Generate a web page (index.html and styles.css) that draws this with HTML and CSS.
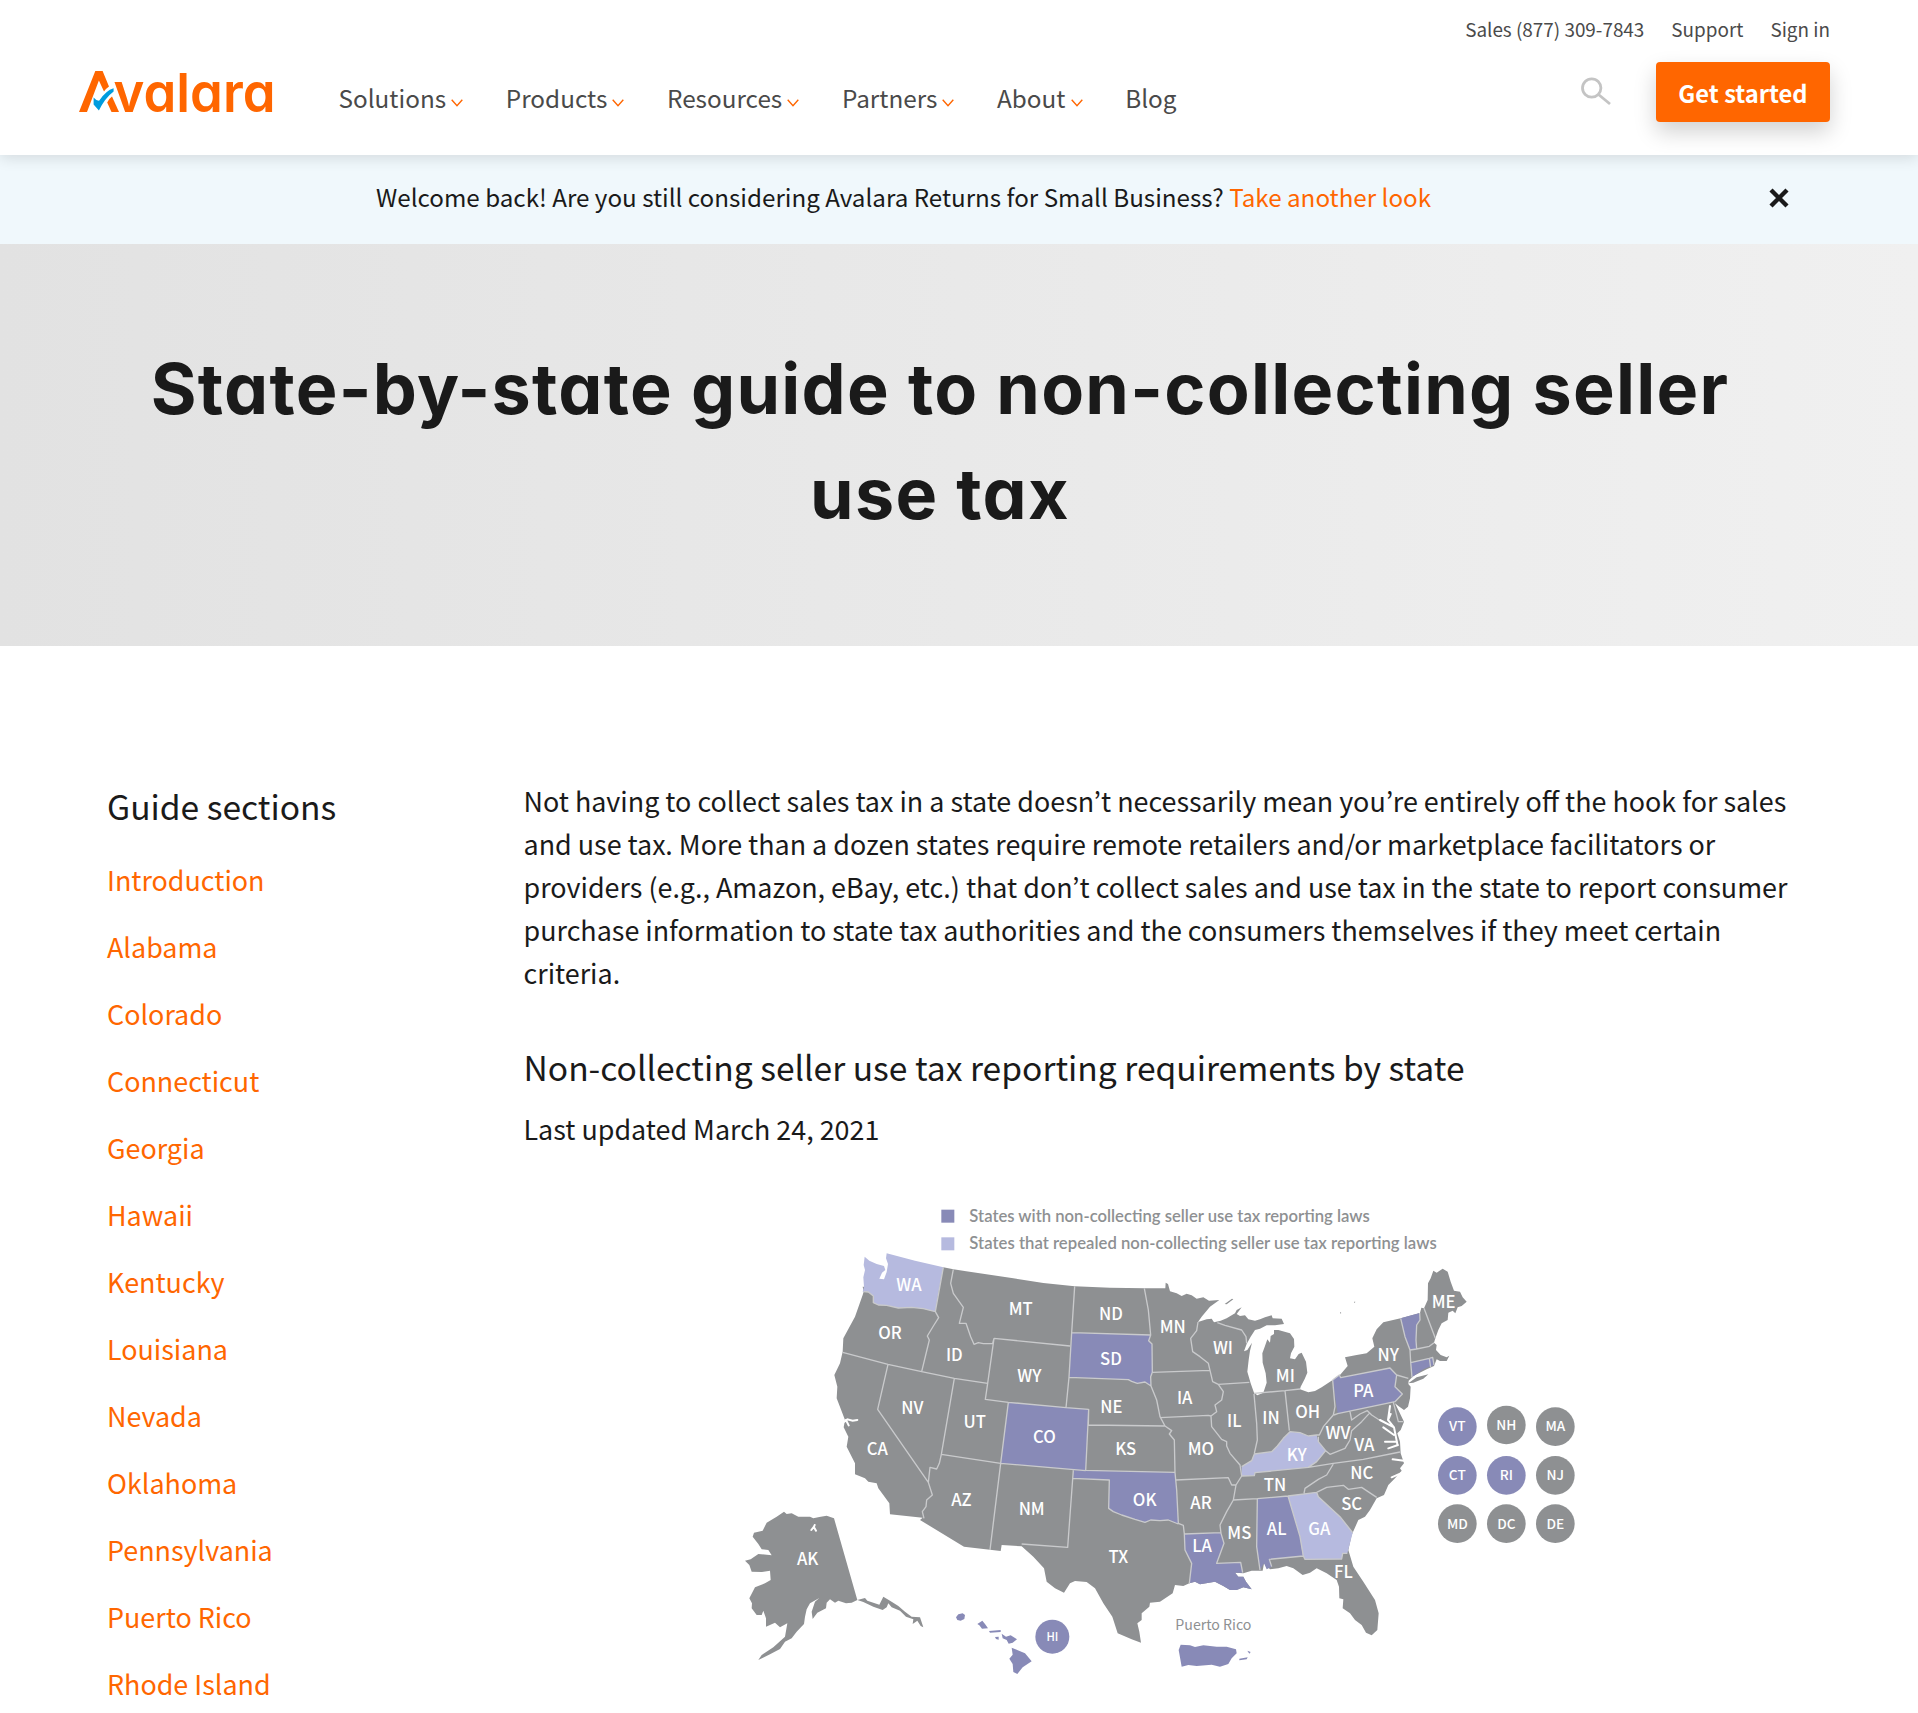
FILE: index.html
```
<!DOCTYPE html>
<html lang="en">
<head>
<meta charset="utf-8">
<title>State-by-state guide to non-collecting seller use tax</title>
<link rel="stylesheet" href="styles.css">
</head>
<body>
<header class="header">
  <div class="utility">
    <a>Sales (877) 309-7843</a>
    <a>Support</a>
    <a>Sign in</a>
  </div>
  <div class="bar">
    <svg class="logo" width="200" height="50" viewBox="0 0 200 50" aria-label="Avalara">
      <path class="logo-ink" d="M0 47 L16.3 6 H23.6 L30 21.5 Q27 23.5 25 26.5 L19.9 15.5 L8 47Z"/>
      <path class="logo-ink" d="M28.2 37.5 Q30 33.5 33 31.5 L40 47 H32.5Z"/>
      <path class="logo-check" d="M14.6 32.5 Q17.5 36 20.3 35.6 Q27 25.5 34.6 23.3 V26.5 Q26 33 19.9 45.5 L14.6 39.5Z"/>
      <text class="logo-text" x="34.5" y="47" textLength="162" lengthAdjust="spacingAndGlyphs">valara</text>
    </svg>
    <nav class="nav">
      <a>Solutions<svg class="chev" viewBox="0 0 12 8"><path d="M.7 .8 L6 6.6 L11.3 .8"/></svg></a>
      <a>Products<svg class="chev" viewBox="0 0 12 8"><path d="M.7 .8 L6 6.6 L11.3 .8"/></svg></a>
      <a>Resources<svg class="chev" viewBox="0 0 12 8"><path d="M.7 .8 L6 6.6 L11.3 .8"/></svg></a>
      <a>Partners<svg class="chev" viewBox="0 0 12 8"><path d="M.7 .8 L6 6.6 L11.3 .8"/></svg></a>
      <a>About<svg class="chev" viewBox="0 0 12 8"><path d="M.7 .8 L6 6.6 L11.3 .8"/></svg></a>
      <a>Blog</a>
    </nav>
    <svg class="search" viewBox="0 0 30 29"><circle cx="10.7" cy="11" r="9.2"/><path d="M17.5 17.5 L29 27"/></svg>
    <a class="cta">Get started</a>
  </div>
</header>
<div class="banner">
  <p>Welcome back! Are you still considering Avalara Returns for Small Business? <a>Take another look</a></p>
  <svg class="close" viewBox="0 0 20 20"><path d="M2 2 L18 18 M18 2 L2 18"/></svg>
</div>
<section class="hero"><h1>State-by-state guide to non-collecting seller use tax</h1></section>
<main class="content">
  <aside class="guide">
    <h3>Guide sections</h3>
    <ul>
      <li>Introduction</li><li>Alabama</li><li>Colorado</li><li>Connecticut</li><li>Georgia</li><li>Hawaii</li><li>Kentucky</li><li>Louisiana</li><li>Nevada</li><li>Oklahoma</li><li>Pennsylvania</li><li>Puerto Rico</li><li>Rhode Island</li>
    </ul>
  </aside>
  <article class="article">
    <p>Not having to collect sales tax in a state doesn’t necessarily mean you’re entirely off the hook for sales and use tax. More than a dozen states require remote retailers and/or marketplace facilitators or providers (e.g., Amazon, eBay, etc.) that don’t collect sales and use tax in the state to report consumer purchase information to state tax authorities and the consumers themselves if they meet certain criteria.</p>
    <h2>Non-collecting seller use tax reporting requirements by state</h2>
    <p>Last updated March 24, 2021</p>
    <svg class="map" viewBox="0 0 2640 1569">
      <rect class="law" x="634" y="59" width="39" height="39"/>
      <rect class="old" x="634" y="142" width="39" height="39"/>
      <text class="legend" x="718" y="97" textLength="1201">States with non-collecting seller use tax reporting laws</text>
      <text class="legend" x="718" y="177" textLength="1402">States that repealed non-collecting seller use tax reporting laws</text>

      <!-- mainland -->
      <path class="land" d="M640 232 670 238 850 265 940 279 1034 289 1140 293 1243 295 1306 295 1307 278 1314 282 1320 304 1340 310 1355 318 1370 311 1385 316 1400 326 1420 322 1437 332 1468 330 1440 350 1415 380 1404 396 1430 388 1445 386 1452 397 1472 392 1490 385 1515 370 1520 360 1535 352 1520 372 1530 378 1545 376 1555 388 1575 392 1590 388 1605 382 1625 376 1628 385 1655 386 1662 402 1635 406 1610 406 1590 416 1575 420 1562 440 1550 462 1542 484 1552 480 1566 458 1560 482 1556 510 1552 545 1562 580 1572 608 1582 616 1600 608 1610 578 1607 550 1598 518 1597 490 1605 468 1612 448 1620 458 1622 438 1632 432 1632 420 1645 420 1680 430 1692 447 1693 470 1683 490 1680 505 1695 508 1706 492 1715 488 1728 515 1732 548 1724 567 1712 590 1710 598 1735 607 1755 603 1775 592 1808 570 1830 555 1853 528 1845 502 1880 495 1910 490 1933 470 1927 445 1940 418 1960 397 2012 385 2070 369 2074 353 2082 355 2093 330 2094 280 2102 265 2110 242 2120 248 2138 236 2153 245 2162 275 2172 302 2190 305 2198 322 2210 335 2195 348 2183 352 2176 370 2168 362 2155 368 2153 390 2135 400 2125 420 2116 445 2112 458 2120 465 2118 480 2132 495 2150 502 2158 497 2150 513 2130 513 2120 508 2112 528 2090 538 2050 558 2036 572 2035 582 2042 590 2040 625 2034 650 2022 660 2005 648 1995 640 2005 660 2022 695 2012 720 2002 730 2010 755 2012 790 2022 820 2010 835 2015 842 1995 865 1975 885 1962 915 1940 925 1920 960 1905 980 1885 990 1865 1035 1855 1080 1870 1130 1900 1175 1935 1230 1946 1270 1942 1320 1925 1336 1908 1328 1895 1305 1875 1290 1860 1270 1838 1255 1840 1228 1828 1225 1827 1190 1820 1170 1790 1150 1760 1135 1740 1148 1718 1155 1690 1135 1670 1128 1645 1135 1620 1138 1602 1120 1598 1142 1565 1142 1540 1150 1515 1148 1525 1160 1540 1160 1548 1175 1565 1198 1540 1192 1520 1200 1500 1200 1480 1188 1455 1175 1410 1183 1395 1175 1378 1180 1360 1188 1335 1185 1328 1210 1290 1235 1260 1238 1258 1250 1235 1270 1235 1290 1222 1300 1228 1325 1233 1358 1205 1348 1163 1330 1147 1280 1120 1240 1095 1195 1070 1176 1035 1173 1020 1180 1002 1208 975 1195 950 1175 942 1135 910 1100 875 1069 815 1065 812 1083 702 1070 570 990 578 983 480 973 478 940 445 895 440 880 415 875 405 865 375 853 375 820 350 770 355 740 341 712 345 690 320 625 322 590 313 555 330 520 338 485 340 445 375 380 398 315 401 305 398 290 616 300Z"/>

      <!-- highlighted states -->
      <path class="old" d="M404 200 418 212 440 222 462 228 466 240 456 248 448 266 462 268 470 246 474 222 468 205 470 190 555 212 640 232 624 315 616 365 580 356 545 352 505 354 470 346 445 345 430 338 430 318 415 306 398 305 402 290 400 262 405 240 401 225Z"/>
      <path class="law" d="M1026 428 1262 435 1256 452 1266 462 1267 547 1262 560 1263 588 1245 576 1222 580 1205 574 1195 569 1017 562Z"/>
      <path class="law" d="M835 637 1076 658 1067 842 812 820Z"/>
      <path class="law" d="M1030 841 1335 847 1340 900 1345 1002 1315 990 1290 992 1262 990 1245 997 1215 988 1175 975 1150 965 1136 955 1138 870 1030 865Z"/>
      <path class="law" d="M1363 1032 1473 1028 1482 1060 1460 1120 1532 1117 1538 1148 1515 1148 1525 1160 1540 1160 1548 1175 1565 1198 1540 1192 1520 1200 1500 1200 1480 1188 1455 1175 1410 1183 1395 1175 1378 1180 1385 1120 1365 1080Z"/>
      <path class="law" d="M1582 926 1674 918 1710 1040 1720 1098 1618 1108 1625 1130 1610 1138 1602 1120 1590 1140 1580 1070Z"/>
      <path class="old" d="M1674 918 1760 907 1765 920 1830 980 1868 1028 1852 1090 1838 1090 1835 1107 1725 1108 1718 1095 1710 1040Z"/>
      <path class="old" d="M1535 830 1565 812 1573 792 1625 785 1642 768 1660 745 1680 725 1710 728 1735 738 1760 735 1765 755 1787 782 1760 815 1735 832 1575 848 1573 857 1535 858Z"/>
      <path class="law" d="M1808 570 1828 555 1832 563 1980 534 2000 555 1995 590 2017 612 1995 635 1823 671Z"/>
      <path class="law" d="M2012 385 2069 369 2070 390 2060 405 2058 450 2060 477 2040 480 2025 440Z"/>
      <path class="law" d="M2042 518 2098 505 2108 502 2112 525 2080 538 2046 562Z"/>

      <!-- borders -->
      <path class="line" d="M640 232 616 365 626 383 612 405 592 438 598 450 575 545M401 305 415 306 430 318 430 338 445 345 470 346 505 354 545 352 580 356 616 365M670 238 662 280 670 310 700 352 688 400 708 400 722 440 732 463 745 458 760 461 788 460 792 445M1034 289 1025 428 1017 562 1008 653M792 445 1020 468M792 445 773 580 766 628 835 637 1008 653 1076 658M338 487 474 523 575 545 673 565 773 580M474 523 443 658 595 877 607 915 590 930 588 950 577 965 582 985M595 877 600 832 620 837 628 820 634 793 673 565M634 793 812 820 1067 842M835 637 812 820 780 1080M1067 842 1076 658 1075 705 1305 708M1030 841 1028 867 1013 1072 875 1062M1067 841 1335 847M1028 865 1138 870 1136 955 1150 965 1175 975 1215 988 1245 997 1262 990 1290 992 1315 990 1345 1002M1305 708 1325 722 1318 732 1333 750 1335 847 1340 900 1345 1000 1360 1006 1363 1032 1365 1080 1385 1120 1378 1180M1026 428 1262 435 1256 452 1266 462 1267 547 1262 560 1263 588 1245 576 1222 580 1205 574 1195 569 1017 562M1243 295 1255 360 1262 435M1263 588 1280 630 1290 680 1305 708M1267 547 1440 541M1404 396 1400 422 1382 445 1388 485 1410 500 1435 520 1440 541 1448 575 1465 583 1480 605 1475 630 1455 645 1460 665 1443 678 1445 710 1475 748 1490 755 1490 768 1500 790 1530 825 1535 858 1518 885 1510 930 1490 965 1470 1005 1473 1030 1482 1060 1460 1120 1532 1117 1538 1148M1290 683 1435 676 1443 678M1465 583 1558 577M1462 398 1485 406 1535 420 1548 440 1550 460M1572 612 1580 700 1582 750 1573 790M1572 610 1665 602 1710 597M1665 602 1678 722M1535 830 1565 812 1573 792 1625 785 1642 768 1660 745 1680 725 1710 728 1735 738 1760 735 1768 735 1780 710 1810 675 1815 650 1808 570M1765 740 1765 755 1787 782 1760 815 1735 832M1808 570 1828 555 1832 563 1980 534 2000 555 1995 590 2017 612 1995 635 1823 671 1812 675M1860 665 1865 690 1890 672 1912 662 1925 675 1948 690M1920 668 1895 695 1865 722 1860 750 1845 775 1800 793 1787 782M1535 858 1573 857 1575 848 1735 832 1810 820 1900 808 2010 786M1510 930 1582 926 1674 918 1760 907M1810 822 1790 855 1765 868 1725 895 1722 910M1760 907 1790 892 1840 886 1855 898 1895 892 1940 922M1674 918 1710 1040 1720 1098 1725 1108 1835 1107 1838 1090 1852 1090M1760 907 1765 920 1830 980 1868 1028M1582 926 1580 1070 1590 1140M1720 1098 1618 1108 1625 1130M1337 870 1495 863 1505 885 1518 885M1363 1032 1473 1028M2012 385 2025 440 2040 480 2042 516 2046 562M2069 369 2070 390 2060 405 2058 450 2060 477M2082 355 2116 445M2040 480 2060 477 2098 469 2112 458M2042 518 2098 505 2108 502 2112 525M2098 505 2102 532M2000 555 2035 565M1990 637 2005 695 2020 695"/>
      <!-- bays and inlets -->
      <path class="water" d="M1980 648 1974 690 1992 712 2002 762M1974 690 1982 672M1992 712 1950 690M1992 735 1960 712M1998 755 1965 755M2004 765 1975 775M343 695 352 688 368 692 382 690M348 690 356 706M2022 812 1988 808M2012 850 1985 862"/>
      <path class="land" d="M2035 580 2060 562 2095 553 2080 566 2050 578ZM1484 342 1506 326 1510 328 1490 343ZM1830 365 1834 369 1831 371ZM1872 335 1876 335 1874 340Z"/>

      <!-- Alaska -->
      <path class="land" d="M162 965 170 972 185 970 205 980 240 980 250 985 268 981 290 977 312 985 382 1230 365 1238 348 1240 325 1232 315 1238 300 1228 290 1238 288 1255 262 1268 248 1287 245 1265 255 1235 268 1224 240 1240 230 1258 225 1280 222 1302 200 1325 185 1345 165 1355 150 1377 120 1393 85 1410 95 1395 130 1372 165 1340 172 1300 150 1312 135 1298 108 1310 108 1285 100 1262 95 1275 80 1275 65 1255 66 1240 58 1225 75 1192 105 1180 122 1170 120 1142 95 1146 65 1145 58 1125 45 1112 62 1108 85 1092 125 1096 115 1080 95 1078 85 1062 68 1040 72 1028 98 1022 110 998 140 980Z"/>
      <path class="land" d="M382 1230 405 1224 412 1232 430 1238 448 1244 460 1220 480 1232 505 1248 525 1265 545 1280 570 1282 580 1312 572 1308 562 1292 548 1302 550 1288 528 1280 510 1262 485 1252 475 1240 470 1252 458 1260 430 1250 400 1236Z"/>
      <path class="water" d="M244 1020 252 1010 254 1005M258 1022 252 1012"/>

      <!-- Hawaii -->
      <path class="law" d="M678 1282 685 1273 698 1270 705 1275 703 1287 692 1292 682 1290ZM742 1302 757 1292 765 1302 774 1315 756 1316 748 1306ZM777 1323 812 1320 812 1326 780 1328ZM795 1341 806 1340 806 1349 798 1347ZM815 1331 828 1340 842 1336 861 1348 848 1358 836 1361 830 1350 818 1345ZM845 1373 885 1390 905 1414 878 1432 862 1452 850 1446 848 1422 838 1406 848 1394Z"/>
      <circle class="law" cx="967" cy="1340" r="51"/>

      <!-- Puerto Rico -->
      <path class="law" d="M1352 1364 1380 1366 1395 1371 1420 1366 1460 1370 1490 1370 1518 1378 1520 1390 1505 1405 1495 1422 1470 1430 1445 1424 1400 1428 1375 1425 1355 1430 1346 1380ZM1528 1406 1553 1402 1550 1408 1528 1411ZM1552 1382 1562 1386 1558 1391Z"/>

      <g class="land"><circle cx="2329" cy="705" r="58"/><circle cx="2476" cy="710" r="58"/><circle cx="2476" cy="856" r="58"/><circle cx="2182" cy="1001" r="58"/><circle cx="2329" cy="1001" r="58"/><circle cx="2476" cy="1001" r="58"/></g>
      <g class="law"><circle cx="2182" cy="710" r="58"/><circle cx="2182" cy="856" r="58"/><circle cx="2329" cy="856" r="58"/></g>

      <g class="abbr">
        <text x="537" y="302">WA</text><text x="480" y="448">OR</text><text x="673" y="514">ID</text><text x="872" y="376">MT</text><text x="898" y="577">WY</text><text x="547" y="671">NV</text><text x="734" y="715">UT</text><text x="943" y="758">CO</text><text x="1143" y="390">ND</text><text x="1143" y="525">SD</text><text x="1144" y="668">NE</text><text x="1187" y="796">KS</text><text x="442" y="796">CA</text><text x="694" y="947">AZ</text><text x="905" y="975">NM</text><text x="1165" y="1118">TX</text><text x="1244" y="948">OK</text><text x="233" y="1126">AK</text><text x="1328" y="428">MN</text><text x="1479" y="493">WI</text><text x="1666" y="575">MI</text><text x="1364" y="641">IA</text><text x="1513" y="711">IL</text><text x="1623" y="703">IN</text><text x="1733" y="684">OH</text><text x="1413" y="794">MO</text><text x="1700" y="812">KY</text><text x="1635" y="904">TN</text><text x="1413" y="956">AR</text><text x="1528" y="1048">MS</text><text x="1640" y="1035">AL</text><text x="1768" y="1035">GA</text><text x="1416" y="1086">LA</text><text x="1840" y="1164">FL</text><text x="1865" y="960">SC</text><text x="1895" y="868">NC</text><text x="1824" y="748">WV</text><text x="1903" y="784">VA</text><text x="1900" y="622">PA</text><text x="1975" y="512">NY</text><text x="2141" y="353">ME</text>
      </g>
      <g class="abbr small">
        <text x="2182" y="724">VT</text><text x="2329" y="721">NH</text><text x="2476" y="724">MA</text><text x="2182" y="870">CT</text><text x="2329" y="870">RI</text><text x="2476" y="870">NJ</text><text x="2182" y="1016">MD</text><text x="2329" y="1016">DC</text><text x="2476" y="1016">DE</text>
      </g>
      <text class="abbr tiny" x="967" y="1352">HI</text>
      <text class="place" x="1336" y="1320">Puerto Rico</text>
    </svg>
  </article>
</main>
</body>
</html>
```
FILE: styles.css
```
* { box-sizing: border-box; }
html, body { margin: 0; height: 1713px; overflow: hidden; }
body { background: #fff; color: #1a1a1a; font-family: "Noto Sans CJK JP", "Open Sans", sans-serif; font-size: 26.9px; line-height: 43px; }
h1, h2, h3, p, ul { margin: 0; padding: 0; font-weight: 400; }
.header { position: relative; z-index: 1; height: 155px; padding: 0 88px 0 79px; background: #fff; color: #4a4a4a; box-shadow: 0 3px 14px rgba(0, 0, 0, .12); }
.utility { display: flex; justify-content: flex-end; gap: 27px; height: 58px; line-height: 58px; font-size: 18.9px; }
.bar { display: flex; height: 78px; }
.logo { flex: none; margin-top: 7px; overflow: visible; }
.logo-ink { fill: #f60; }
.logo-check { fill: #009cde; }
.logo-text { fill: #f60; font: 600 54px Inter, sans-serif; font-feature-settings: "cv11"; }
.nav { display: flex; gap: 42.7px; margin-left: 59.5px; font-size: 24.3px; line-height: 80px; }
.nav a { display: flex; align-items: center; height: 80px; }
.chev { width: 12px; height: 8px; margin: 10px 0 0 5px; fill: none; stroke: #f60; stroke-width: 1.4; }
.search { width: 30px; height: 29px; margin: 19px 45px 0 auto; fill: none; stroke: #c4c4c4; stroke-width: 2.8; }
.cta { width: 174px; height: 60px; margin-top: 4px; border-radius: 4px; background: #f60; color: #fff; font-size: 23.7px; font-weight: 700; line-height: 62px; text-align: center; box-shadow: 0 10px 22px rgba(0, 0, 0, .18); }
.banner { display: flex; align-items: center; height: 89px; padding: 0 129px 7px 376px; background: #f0f8fc; font-size: 24.2px; }
.banner a, .guide li { color: #f60; }
.close { width: 20px; height: 20px; margin: 3px 0 0 auto; fill: none; stroke: #1a1a1a; stroke-width: 4.4; }
.hero { height: 402px; padding: 92px 138px 0 100px; background: linear-gradient(90deg, #e2e2e2, #f0f0f0); }
h1 { font: 700 70px/105px Inter, sans-serif; font-feature-settings: "cv11"; letter-spacing: 1.3px; text-align: center; }
.content { display: flex; padding: 133px 120px 0 107px; }
.guide { flex: none; width: 416.5px; }
h2, h3 { font-size: 33.6px; line-height: 50px; }
.guide h3 { margin: 2px 0 15px; }
.guide ul { list-style: none; line-height: 67px; }
.article { flex: none; width: 1275px; }
h2 { margin: 48px 0 15px; }
.map { display: block; width: 880px; height: 523px; margin: 40px 0 0 206.5px; }
.land { fill: #8e9092; }
.law { fill: #888ab7; }
.old { fill: #b6badf; }
.line { fill: none; stroke: #c9cacc; stroke-width: 4; stroke-linejoin: round; }
.water { fill: none; stroke: #fff; stroke-width: 6; stroke-linecap: round; }
.legend { fill: #8e9092; font: 600 50px Lato, sans-serif; }
.abbr { fill: #fff; font-size: 50px; font-weight: 500; text-anchor: middle; }
.small { font-size: 41px; }
.tiny { font-size: 34px; }
.place { fill: #8e9092; font-size: 42.5px; }
```
